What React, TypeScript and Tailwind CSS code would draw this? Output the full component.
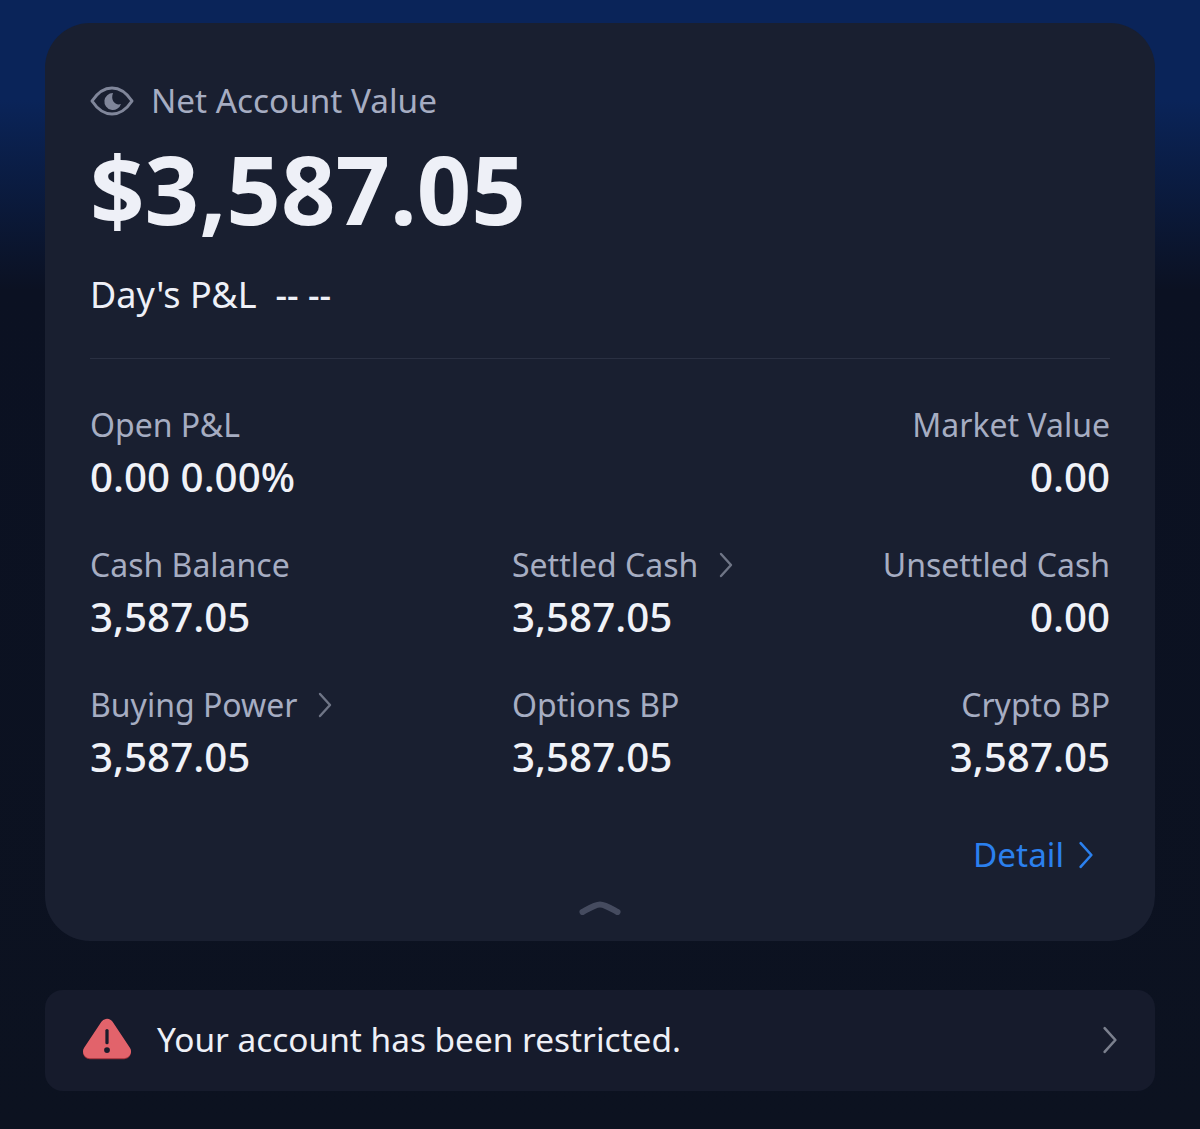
import React from 'react';

const Chevron = ({ className }: { className: string }) => (
  <svg viewBox="0 0 14 26" fill="none" stroke="currentColor" strokeWidth="2.4" strokeLinecap="round" strokeLinejoin="round" className={className}>
    <path d="M2 2l10 11L2 24" />
  </svg>
);

const Stat = ({ label, value, right, link }: { label: string; value: string; right?: boolean; link?: boolean }) => (
  <div className={right ? 'text-right' : ''}>
    <div className={`flex items-center h-[44px] text-[32px] leading-[44px] text-[#a6adc2] ${right ? 'justify-end' : ''}`}>
      <span>{label}</span>
      {link && <Chevron className="ml-[21px] w-[14px] h-[26px] text-[#6f7586]" />}
    </div>
    <div className="mt-[8px] text-[40.300px] leading-[44px] font-medium text-[#f0f2f8]">{value}</div>
  </div>
);

export default function App() {
  return (
    <div
      className="w-[1200px] h-[1129px] overflow-hidden px-[45px] pt-[23px] bg-[linear-gradient(180deg,#0a2459_0px,#0a2459_100px,#0b1122_290px,#0c1220_1129px)]"
      style={{ fontFamily: '"Noto Sans", "Open Sans", sans-serif' }}
    >
      <div className="h-[918px] rounded-[45px] bg-[#191f30] px-[45px] pt-[55px]">
        <div className="flex items-center h-[46px]">
          <svg viewBox="0 0 44 30" className="w-[44px] h-[30px] text-[#80869a]" fill="none">
            <path d="M2 15C8 6 14 2 22 2s14 4 20 13c-6 9-12 13-20 13S8 24 2 15z" stroke="currentColor" strokeWidth="3" strokeLinejoin="round" />
            <path d="M23 7a8.500 8.500 0 1 0 8 11c-5 2-11-3-8-11z" fill="currentColor" />
          </svg>
          <span className="ml-[17px] mb-[2px] text-[33.3px] leading-[46px] text-[#a6adc2]">Net Account Value</span>
        </div>
        <div className="mt-[14px] h-[100px] text-[95.400px] leading-[100px] font-bold text-[#eef0f7]">$3,587.05</div>
        <div className="mt-[31px] flex items-center h-[52px] text-[36px] leading-[52px] text-[#eef0f7]">
          <span>Day's P&amp;L</span>
          <span className="ml-[19px] font-medium">-- --</span>
        </div>
        <div className="mt-[37px] h-px bg-[#2a3042]" />

        <div className="mt-[44px] grid grid-cols-[422px_1fr_1fr] gap-y-[44px]">
          <div className="col-span-2">
            <Stat label="Open P&L" value="0.00 0.00%" />
          </div>
          <Stat label="Market Value" value="0.00" right />
          <Stat label="Cash Balance" value="3,587.05" />
          <Stat label="Settled Cash" value="3,587.05" link />
          <Stat label="Unsettled Cash" value="0.00" right />
          <Stat label="Buying Power" value="3,587.05" link />
          <Stat label="Options BP" value="3,587.05" />
          <Stat label="Crypto BP" value="3,587.05" right />
        </div>

        <div className="mt-[53px] flex items-center justify-end pr-[16px] h-[46px] text-[33.3px] text-[#2b80ee]">
          <span>Detail</span>
          <Chevron className="ml-[14px] w-[16px] h-[28px]" />
        </div>
        <div className="mt-[23px] flex justify-center">
          <svg viewBox="0 0 42 14" className="w-[42px] h-[14px] text-[#454b5f]" fill="none">
            <path d="M3.500 11C9 8 16 3.500 21 3.500S33 8 38.500 11" stroke="currentColor" strokeWidth="6" strokeLinecap="round" />
          </svg>
        </div>
      </div>

      <div className="mt-[49px] h-[101px] rounded-[18px] bg-[#161b2c] flex items-center pl-[38px] pr-[37px] pb-[2px]">
        <svg viewBox="0 0 50 44" className="w-[48px] h-[43px] shrink-0">
          <path d="M25 8.500L43 35.500H7z" fill="#9c3038" stroke="#9c3038" strokeWidth="14" strokeLinejoin="round" />
          <path d="M25 7.500L43 34.500H7z" fill="#e2636b" stroke="#e2636b" strokeWidth="14" strokeLinejoin="round" />
          <rect x="23.300" y="11" width="3.400" height="16" rx="1.700" fill="#1a1c2b" />
          <circle cx="25" cy="33" r="3" fill="#1a1c2b" />
        </svg>
        <span className="ml-[26px] mb-[2px] flex-1 text-[33.400px] leading-[48px] text-[#eef0f7]">Your account has been restricted.</span>
        <Chevron className="w-[16px] h-[28px] text-[#7b808e]" />
      </div>
    </div>
  );
}
